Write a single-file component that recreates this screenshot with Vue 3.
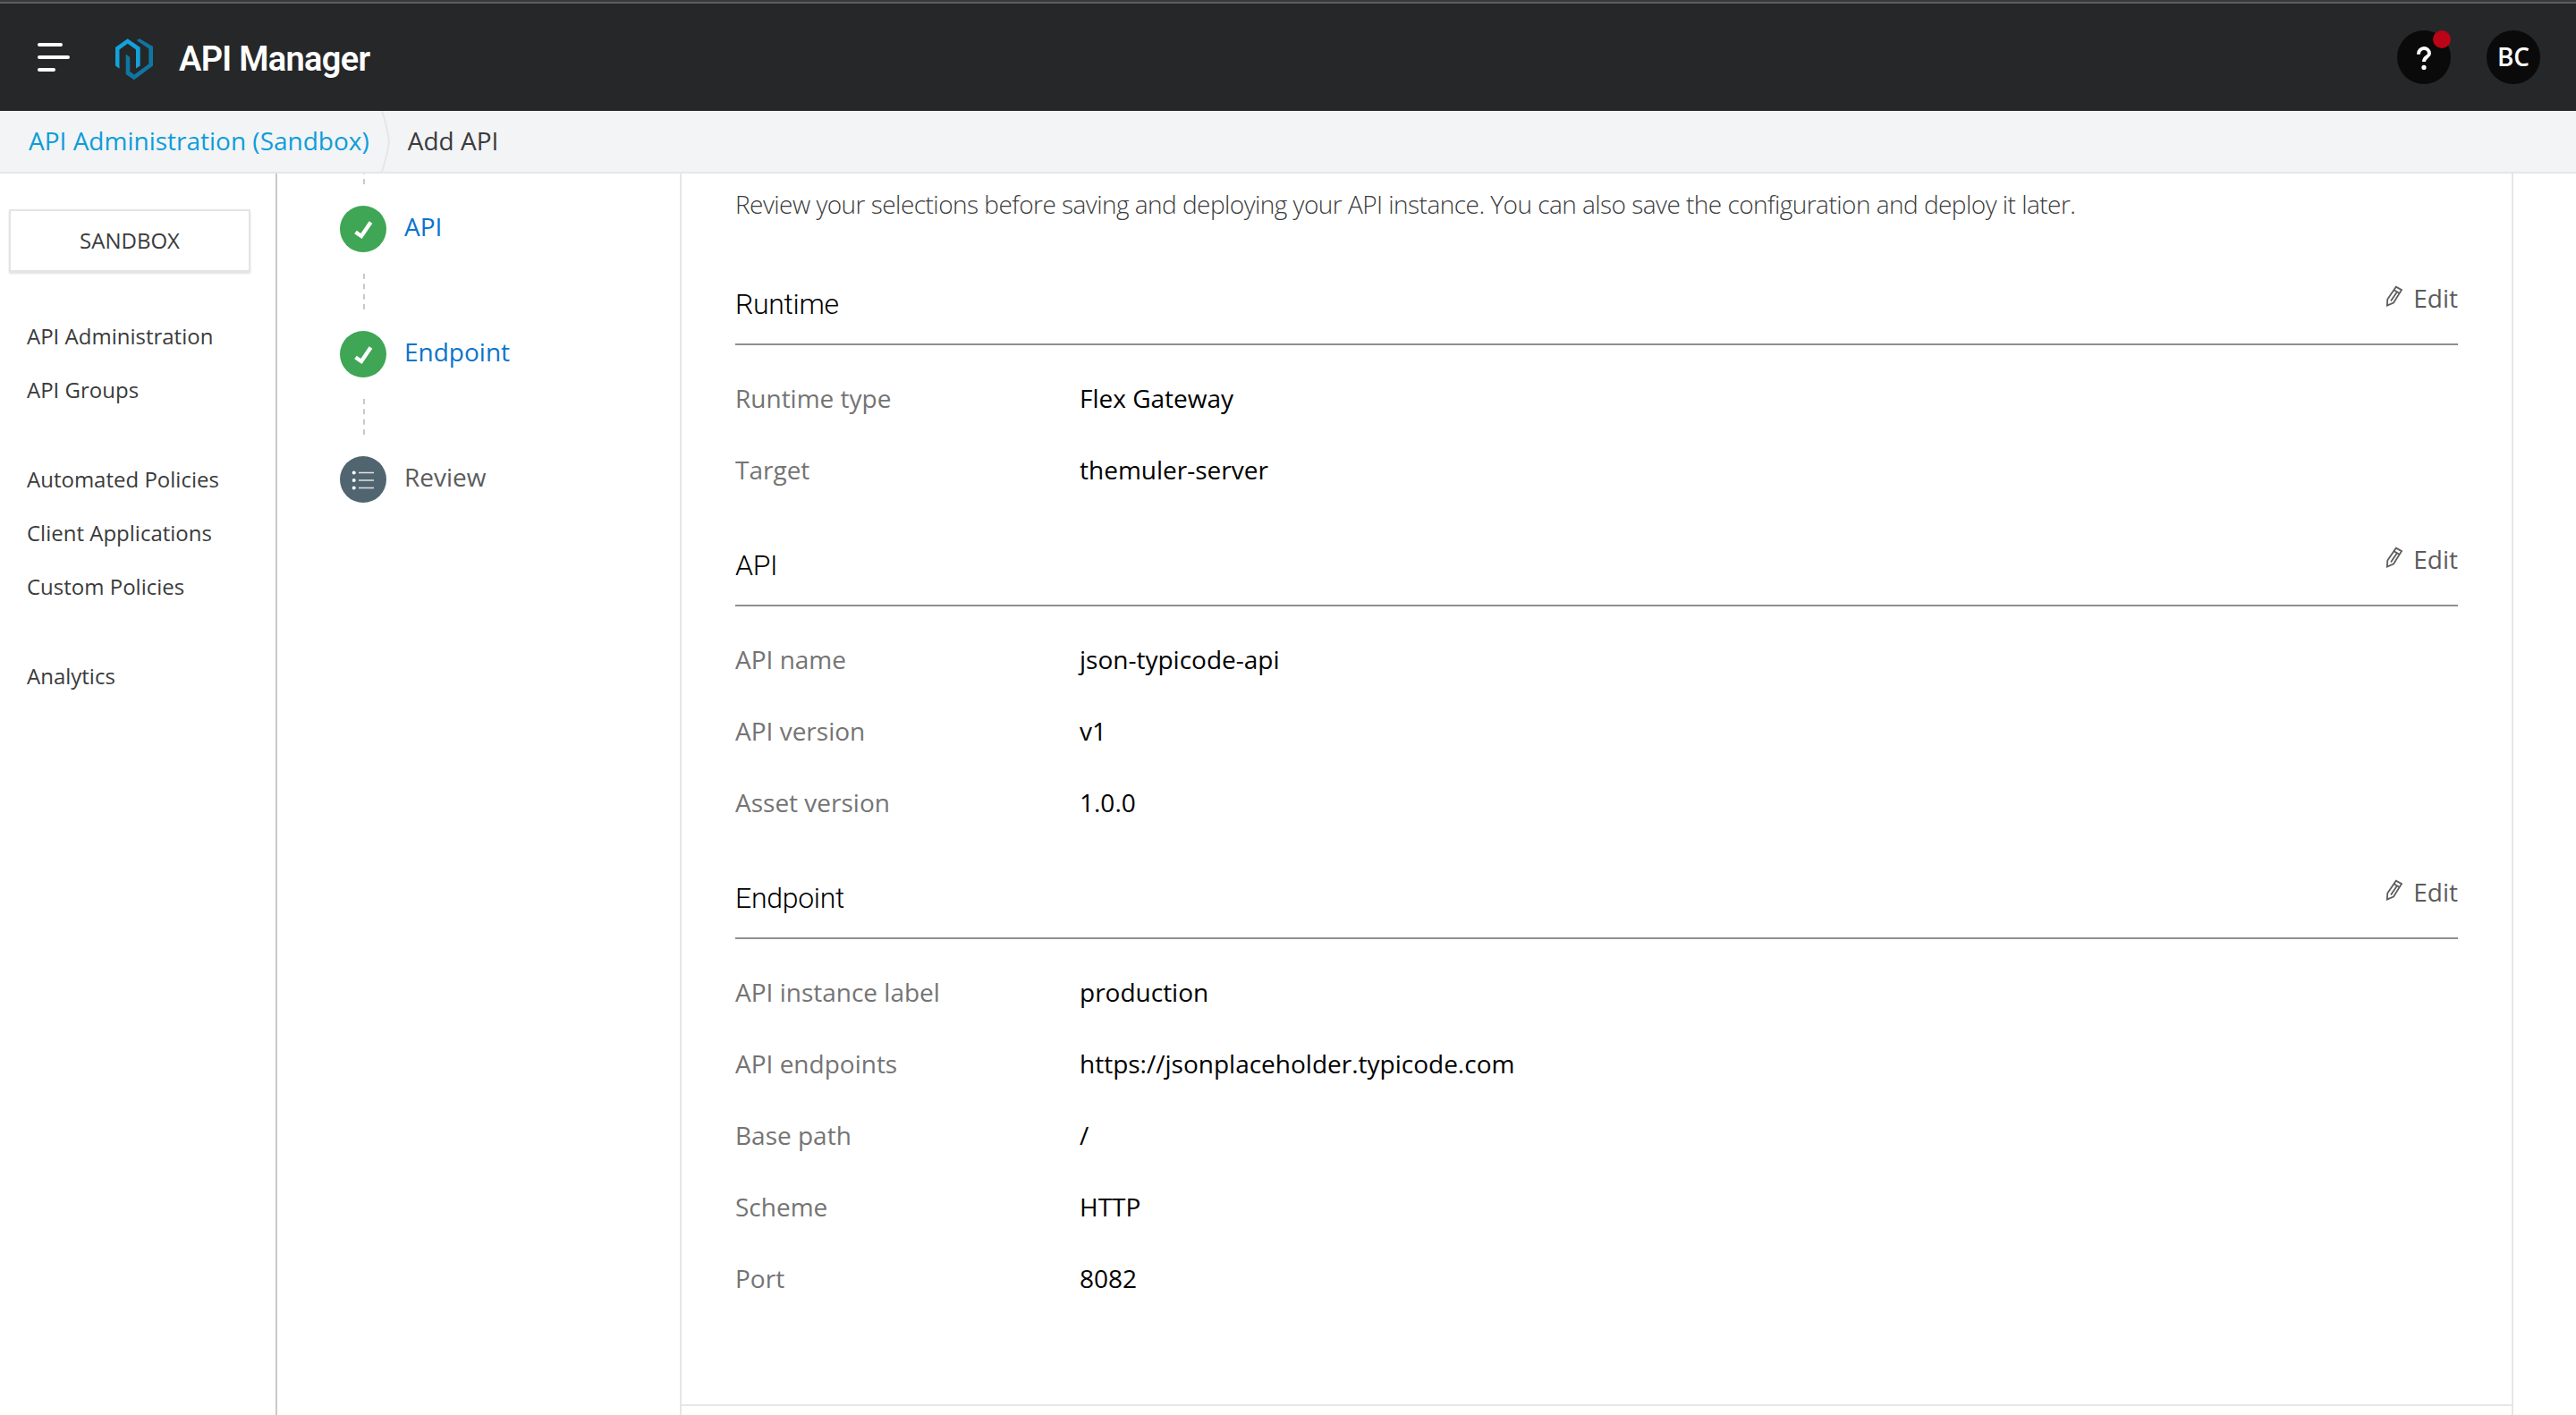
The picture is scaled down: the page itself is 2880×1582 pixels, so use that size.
<script setup>
const navGroups = [
  ['API Administration', 'API Groups'],
  ['Automated Policies', 'Client Applications', 'Custom Policies'],
  ['Analytics'],
]

const steps = [
  { label: 'API', done: true },
  { label: 'Endpoint', done: true },
  { label: 'Review', done: false },
]

const sections = [
  {
    title: 'Runtime',
    rows: [
      { label: 'Runtime type', value: 'Flex Gateway' },
      { label: 'Target', value: 'themuler-server' },
    ],
  },
  {
    title: 'API',
    rows: [
      { label: 'API name', value: 'json-typicode-api' },
      { label: 'API version', value: 'v1' },
      { label: 'Asset version', value: '1.0.0' },
    ],
  },
  {
    title: 'Endpoint',
    rows: [
      { label: 'API instance label', value: 'production' },
      { label: 'API endpoints', value: 'https://jsonplaceholder.typicode.com' },
      { label: 'Base path', value: '/' },
      { label: 'Scheme', value: 'HTTP' },
      { label: 'Port', value: '8082' },
    ],
  },
]
</script>

<template>
  <div class="app">
    <header class="topbar">
      <button class="menu-btn" aria-label="Menu">
        <span class="bar mid"></span>
        <span class="bar long"></span>
        <span class="bar short"></span>
      </button>
      <svg class="logo" viewBox="0 0 44 56" width="44" height="56">
        <path d="M24.7 5 L28 3.300 L43 12 V33.500 L22 49.300 L12.700 43 V20.500 L17.300 24 V40 L22 43.500 L38.300 31.500 V14.500 Z" fill="#0f76a0" />
        <path d="M1 13 L14.700 3.300 L28.700 13 V33.500 L24 36.500 V15.500 L14.700 8.700 L5.500 15.500 V36.700 L1 33.500 Z" fill="#12a2dd" />
      </svg>
      <h1 class="product">API Manager</h1>
      <div class="topbar-actions">
        <button class="round-btn">
          <svg viewBox="0 0 20 28" width="20" height="28">
            <path d="M4 10.800 V10.200 A6.100 6.100 0 0 1 10 4 A6 6 0 0 1 16 9.900 C16 13.700 10 13.200 10 19" fill="none" stroke="#fff" stroke-width="4" />
            <circle cx="10" cy="25.400" r="2.600" fill="#fff" />
          </svg>
          <span class="badge"></span>
        </button>
        <button class="round-btn avatar">BC</button>
      </div>
    </header>

    <nav class="crumbs">
      <a class="crumb crumb-link">API Administration (Sandbox)</a>
      <svg class="crumb-sep" viewBox="0 0 12 68" width="12" height="68">
        <path d="M1 0 Q7 18 9 34 Q7 50 1 68" fill="none" stroke="#e4e6e8" stroke-width="2" />
      </svg>
      <span class="crumb">Add API</span>
    </nav>

    <div class="body">
      <aside class="sidebar">
        <button class="env-btn">SANDBOX</button>
        <ul v-for="(group, i) in navGroups" :key="i" class="nav-group">
          <li v-for="item in group" :key="item">{{ item }}</li>
        </ul>
      </aside>

      <div class="steps">
        <div v-for="step in steps" :key="step.label" class="step">
          <svg class="connector" viewBox="0 0 2 40" width="2" height="40">
            <path d="M1 0 V40" stroke="#cacaca" stroke-width="2" stroke-dasharray="6 5.333" />
          </svg>
          <div class="step-row" :class="{ done: step.done }">
            <span class="step-icon">
              <svg v-if="step.done" viewBox="0 0 52 52" width="52" height="52">
                <path d="M17.500 29.500 L24 34 L34.500 18.500" fill="none" stroke="#fff" stroke-width="4.400" />
              </svg>
              <svg v-else viewBox="0 0 52 52" width="52" height="52">
                <g fill="#fff">
                  <circle cx="15.700" cy="18.500" r="2" />
                  <circle cx="15.700" cy="27" r="2" />
                  <circle cx="15.700" cy="35.500" r="2" />
                </g>
                <path d="M21 18.500 H38 M21 27 H38 M21 35.500 H38" stroke="#dfe4e7" stroke-width="1.400" />
              </svg>
            </span>
            <span>{{ step.label }}</span>
          </div>
        </div>
      </div>

      <main class="card">
        <div class="card-body">
          <p class="intro">
            Review your selections before saving and deploying your API instance. You can also save the configuration and deploy it later.
          </p>
          <section v-for="section in sections" :key="section.title" class="section">
            <div class="section-head">
              <h2>{{ section.title }}</h2>
              <button class="edit-btn">
                <svg viewBox="0 0 20 24" width="20" height="24">
                  <g fill="none" stroke="#5c5c5c" stroke-width="1.800">
                    <path d="M1.800 22.500 L2.300 15.500 L11.800 1.800 L18 5.200 L9 19.500 Z" />
                    <path d="M9.500 5.300 L15.800 9 M6 17.500 L13 7.300" />
                  </g>
                </svg>
                Edit
              </button>
            </div>
            <dl>
              <div v-for="row in section.rows" :key="row.label" class="row">
                <dt>{{ row.label }}</dt>
                <dd>{{ row.value }}</dd>
              </div>
            </dl>
          </section>
        </div>
      </main>
    </div>
  </div>
</template>

<style>
body {
  background: #fff;
}
</style>

<style scoped>
.app {
  height: 1582px;
  display: flex;
  flex-direction: column;
  overflow: hidden;
  font-family: 'Open Sans', 'Noto Sans', sans-serif;
  font-size: 28px;
  color: #3a3b3c;
}
button {
  background: none;
  border: none;
  padding: 0;
  font: inherit;
  color: inherit;
}
.topbar {
  height: 124px;
  flex: none;
  box-sizing: border-box;
  padding: 4px 40px 0 42px;
  display: flex;
  align-items: center;
  background: linear-gradient(#38393a 2px, #5d5e5f 2px, #5d5e5f 4px, #262728 4px);
  color: #fff;
}
.menu-btn {
  width: 36px;
  display: flex;
  flex-direction: column;
  gap: 10px;
}
.bar {
  height: 4px;
  border-radius: 2px;
  background: #fff;
}
.bar.mid { width: 28px; }
.bar.long { width: 36px; }
.bar.short { width: 20px; }
.logo {
  margin: 8px 0 0 50px;
}
.product {
  margin: 4px 0 0 28px;
  font-family: Roboto, sans-serif;
  font-size: 38px;
  font-weight: 600;
  letter-spacing: -0.7px;
}
.topbar-actions {
  margin-left: auto;
  display: flex;
  gap: 40px;
}
.round-btn {
  position: relative;
  width: 60px;
  height: 60px;
  border-radius: 50%;
  background: #0a0a0a;
  display: flex;
  align-items: center;
  justify-content: center;
  font-weight: 600;
}
.round-btn.avatar {
  padding-bottom: 2px;
}
.badge {
  position: absolute;
  top: 0;
  right: 0;
  width: 20px;
  height: 20px;
  border-radius: 50%;
  background: #ba0517;
}
.crumbs {
  height: 70px;
  flex: none;
  box-sizing: border-box;
  border-bottom: 2px solid #e5e6e7;
  padding: 0 32px;
  display: flex;
  align-items: center;
  background: #f3f4f6;
}
.crumb {
  padding-bottom: 2px;
}
.crumb-link {
  color: #0d9dda;
}
.crumb-sep {
  margin: 0 18px 0 13px;
}
.body {
  flex: 1;
  display: flex;
  min-height: 0;
  overflow: hidden;
}
.sidebar {
  width: 310px;
  box-sizing: border-box;
  border-right: 2px solid #c9c9c9;
  padding: 40px 28px 0 10px;
  font-size: 24px;
}
.env-btn {
  display: block;
  width: 270px;
  height: 70px;
  border: 2px solid #e4e4e4;
  box-shadow: 0 2px 2px rgba(0, 0, 0, 0.12);
  padding-bottom: 2px;
  margin-bottom: 42px;
}
.nav-group {
  list-style: none;
  margin: 0 0 40px;
  padding: 0 0 0 20px;
}
.nav-group li {
  line-height: 60px;
}
.steps {
  width: 450px;
  box-sizing: border-box;
  padding-left: 70px;
}
.step {
  height: 140px;
}
.step:first-child {
  margin-top: -28px;
}
.connector {
  display: block;
  margin-left: 26px;
}
.step-row {
  display: flex;
  gap: 20px;
  margin-top: 24px;
  line-height: 46px;
  color: #5c5c5c;
}
.step-row.done {
  color: #0b74cc;
}
.step-icon {
  height: 52px;
  border-radius: 50%;
  background: #506570;
}
.step-row.done .step-icon {
  background: #3ea655;
}
.step-icon svg {
  display: block;
}
.card {
  width: 2050px;
  box-sizing: border-box;
  border: solid #e6e6e6;
  border-width: 0 2px;
}
.card-body {
  height: 1376px;
  border-bottom: 2px solid #e6e6e6;
  padding: 0 60px;
}
.intro {
  margin: 0;
  padding-top: 15px;
  line-height: 38px;
  font-weight: 300;
  letter-spacing: -0.53px;
  white-space: nowrap;
}
.section {
  margin-bottom: 13px;
}
.intro + .section {
  padding-top: 39px;
}
.section-head {
  height: 100px;
  box-sizing: border-box;
  border-bottom: 2px solid #8f8f8f;
  display: flex;
  justify-content: space-between;
}
.section-head h2 {
  margin: 34px 0 0;
  font-family: Roboto, sans-serif;
  font-size: 32px;
  line-height: 40px;
  font-weight: 300;
  letter-spacing: -0.3px;
  color: #000;
}
.edit-btn {
  display: flex;
  align-items: flex-start;
  gap: 11px;
  height: 38px;
  margin-top: 28px;
  line-height: 38px;
  color: #5c5c5c;
}
.edit-btn svg {
  margin-top: 5px;
}
dl {
  margin: 0;
  padding-top: 19px;
}
.row {
  display: flex;
  height: 80px;
  line-height: 80px;
}
dt {
  width: 385px;
  color: #747474;
}
dd {
  margin: 0;
  color: #000;
}
</style>
